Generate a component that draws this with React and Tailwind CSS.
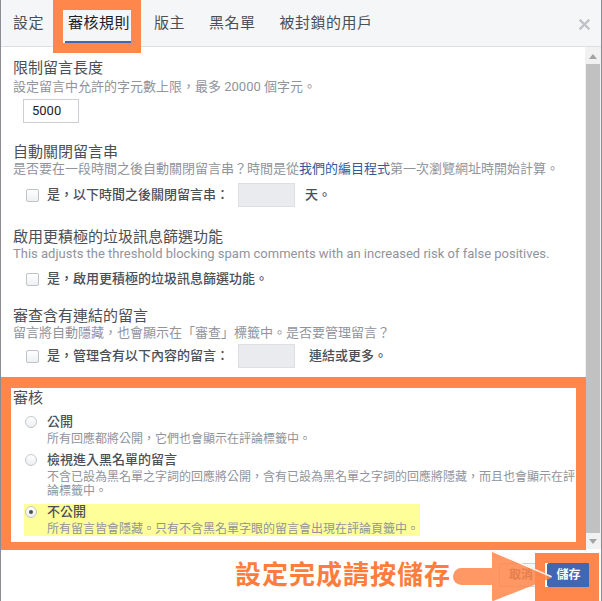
import React from "react";

const tabs = ["設定", "審核規則", "版主", "黑名單", "被封鎖的用戶"];

function Checkbox() {
  return (
    <span className="inline-block h-[13px] w-[13px] shrink-0 rounded-[2px] border border-[#bec3c9] bg-linear-to-b from-white to-[#eef0f2]" />
  );
}

function Radio({ checked }) {
  return (
    <span className="mt-[2px] flex h-[12px] w-[12px] shrink-0 items-center justify-center rounded-full border border-[#c4c7cc] bg-linear-to-b from-white to-[#eceef0]">
      {checked && <span className="h-[4px] w-[4px] rounded-full bg-[#4b4f56]" />}
    </span>
  );
}

function RadioItem({ label, desc, checked, className }) {
  return (
    <div className={"ml-[11px] flex w-fit pl-[1px] " + className}>
      <Radio checked={checked} />
      <div className="ml-[10px]">
        <div className="text-[13px] leading-[16px] font-medium text-[#4b4f56]">{label}</div>
        <div className="mt-[2px] text-[12px] leading-[14px] text-[#90949c]">{desc}</div>
      </div>
    </div>
  );
}

export default function App() {
  return (
    <div className="relative flex h-[601px] w-[602px] flex-col overflow-hidden border-x border-[#8a8d91] bg-white font-[Roboto,'Noto_Sans_CJK_TC',sans-serif]">
      {/* Header */}
      <div className="flex h-[47px] shrink-0 items-start border-b border-[#dddfe2] bg-[#f5f6f7] pl-[9px] pr-[11px]">
        <div className="flex gap-[18px]">
          {tabs.map((t, i) => (
            <div
              key={t}
              className={
                i === 1
                  ? "flex h-[44px] items-center border-b-[3px] border-[#4267b2] px-[3px] pt-[6px] text-[15px] tracking-[0.5px] text-[#1d2129]"
                  : "flex h-[44px] items-center border-b-[3px] border-transparent px-[3px] pt-[6px] text-[15px] tracking-[0.5px] text-[#4b4f56]"
              }
            >
              {t}
            </div>
          ))}
        </div>
        <div className="ml-auto flex h-[46px] items-center pt-[2px]">
          <svg width="11" height="11" viewBox="0 0 11 11">
            <path d="M1.5 1.5 L9.5 9.5 M9.5 1.5 L1.5 9.5" stroke="#bec2c9" strokeWidth="2.4" strokeLinecap="square" />
          </svg>
        </div>
      </div>

      {/* Body */}
      <div className="flex min-h-0 flex-1">
        <div className="flex-1 overflow-hidden pl-[12px] pr-[6px] pt-[13px]">
          <div className="text-[15px] leading-[17px] text-[#4b4f56]">限制留言長度</div>
          <div className="mt-[2px] text-[13px] leading-[16px] text-[#90949c]">設定留言中允許的字元數上限，最多 20000 個字元。</div>
          <div className="mt-[4px] ml-[10px] flex h-[24px] w-[56px] items-center border border-[#ccd0d5] pl-[8px] text-[13px] text-[#1d2129]">5000</div>

          <div className="mt-[21px] text-[15px] leading-[17px] text-[#4b4f56]">自動關閉留言串</div>
          <div className="text-[13px] leading-[16px] text-[#90949c]">
            是否要在一段時間之後自動關閉留言串？時間是從<span className="text-[#365899]">我們的編目程式</span>第一次瀏覽網址時開始計算。
          </div>
          <div className="mt-[6px] flex h-[24px] items-center pl-[13px]">
            <Checkbox />
            <span className="ml-[8px] text-[13px] font-medium text-[#4b4f56]">是，以下時間之後關閉留言串：</span>
            <span className="ml-[9px] h-[24px] w-[57px] border border-[#dddfe2] bg-[#e9ebee]" />
            <span className="ml-[10px] text-[13px] font-medium text-[#4b4f56]">天。</span>
          </div>

          <div className="mt-[22px] text-[15px] leading-[17px] text-[#4b4f56]">啟用更積極的垃圾訊息篩選功能</div>
          <div className="text-[13px] leading-[16px] text-[#90949c]">This adjusts the threshold blocking spam comments with an increased risk of false positives.</div>
          <div className="mt-[5px] flex h-[24px] items-center pl-[13px]">
            <Checkbox />
            <span className="ml-[8px] text-[13px] font-medium text-[#4b4f56]">是，啟用更積極的垃圾訊息篩選功能。</span>
          </div>

          <div className="mt-[17px] text-[15px] leading-[17px] text-[#4b4f56]">審查含有連結的留言</div>
          <div className="text-[13px] leading-[16px] text-[#90949c]">留言將自動隱藏，也會顯示在「審查」標籤中。是否要管理留言？</div>
          <div className="mt-[3px] flex h-[24px] items-center pl-[13px]">
            <Checkbox />
            <span className="ml-[8px] text-[13px] font-medium text-[#4b4f56]">是，管理含有以下內容的留言：</span>
            <span className="ml-[9px] h-[24px] w-[57px] border border-[#dddfe2] bg-[#e9ebee]" />
            <span className="ml-[14px] text-[13px] font-medium text-[#4b4f56]">連結或更多。</span>
          </div>

          <div className="mt-[22px] text-[15px] leading-[17px] text-[#4b4f56]">審核</div>
          <RadioItem className="mt-[7px]" label="公開" desc="所有回應都將公開，它們也會顯示在評論標籤中。" />
          <RadioItem
            className="mt-[6px]"
            label="檢視進入黑名單的留言"
            desc="不含已設為黑名單之字詞的回應將公開，含有已設為黑名單之字詞的回應將隱藏，而且也會顯示在評論標籤中。"
          />
          <RadioItem
            className="mt-[6px] bg-[#ffff99] pr-[1px]"
            checked
            label="不公開"
            desc="所有留言皆會隱藏。只有不含黑名單字眼的留言會出現在評論頁籤中。"
          />
        </div>

        {/* Scrollbar */}
        <div className="flex w-[16px] shrink-0 flex-col bg-[#f1f1f1]">
          <div className="flex h-[17px] items-center justify-center pt-[1px]">
            <svg width="8" height="5" viewBox="0 0 8 5">
              <path d="M0 5 L4 0 L8 5 Z" fill="#a3a3a3" />
            </svg>
          </div>
          <div className="mx-[1px] flex-1 bg-[#c1c1c1]" />
          <div className="flex h-[16px] items-center justify-center">
            <svg width="8" height="5" viewBox="0 0 8 5">
              <path d="M0 0 L8 0 L4 5 Z" fill="#a3a3a3" />
            </svg>
          </div>
        </div>
      </div>

      {/* Footer */}
      <div className="flex h-[52px] shrink-0 items-center justify-end gap-[4px] bg-white pr-[11px]">
        <button className="flex h-[24px] w-[44px] items-center justify-center rounded-[2px] border border-[#ced0d4] bg-[#f6f7f9] text-[12px] font-bold text-[#4b4f56]">取消</button>
        <button className="flex h-[24px] w-[43px] items-center justify-center rounded-[2px] border border-[#4267b2] bg-[#4267b2] text-[12px] font-bold text-white">儲存</button>
      </div>

      {/* Annotations */}
      <div className="absolute left-[52px] top-0 h-[53px] w-[88px] border-[10px] border-[#ff874b]" />
      <div className="absolute left-0 top-[377px] h-[173px] w-[585px] border-x-[10px] border-t-[11px] border-b-[8px] border-[#ff874b]" />
      <div className="absolute left-[534px] top-[553px] h-[50px] w-[64px] border-[10px] border-b-[16px] border-[#ff874b]" />
      <div className="absolute left-[234px] top-[560px] text-[26px] leading-[30px] font-semibold tracking-[1px] text-[#ff7d3c]">設定完成請按儲存</div>
      <svg className="absolute left-[450px] top-[550px] opacity-85" width="104" height="51" viewBox="0 0 104 51">
        <rect x="2" y="18" width="46" height="17" rx="8.5" fill="#ff874b" />
        <polygon points="42,2 42,50 100,27" fill="#ff874b" stroke="#ff874b" strokeWidth="2" strokeLinejoin="round" />
        <path d="M42 1.5 L100 26.5" stroke="white" strokeWidth="1.5" strokeLinecap="round" />
      </svg>
    </div>
  );
}
